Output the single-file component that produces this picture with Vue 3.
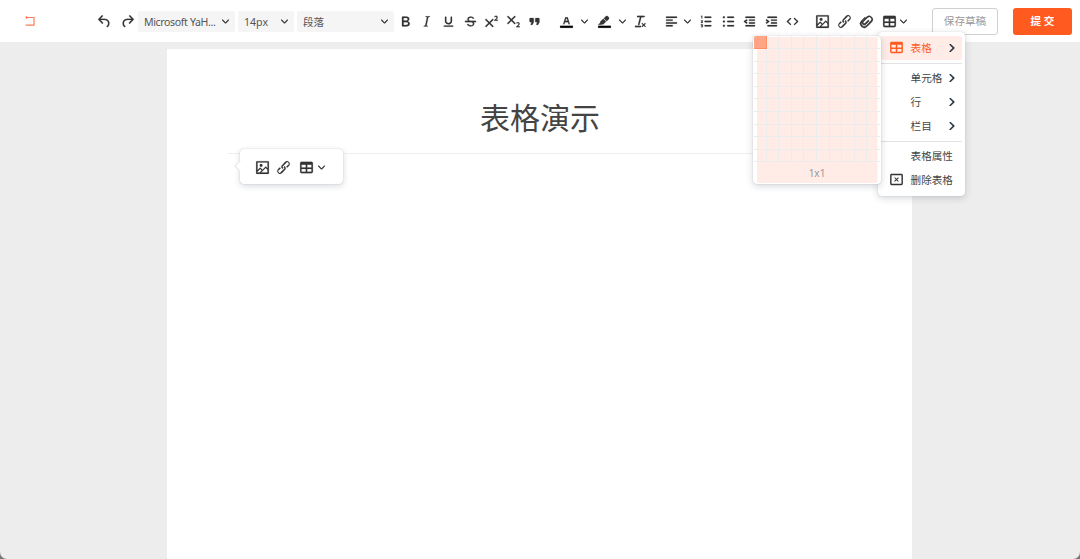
<template>
    <div class="editor">
        <header class="toolbar">
            <div class="back">
                <svg viewBox="0 0 12 12"><path d="M3 1.4 2 2.5l1 1.1M2 2.5h8v7.6H1.6" /></svg>
            </div>
            <div class="group history">
                <span class="tool"><svg viewBox="0 0 24 24"><path :d="icons.undo" /></svg></span>
                <span class="tool"><svg class="flip" viewBox="0 0 24 24"><path :d="icons.undo" /></svg></span>
            </div>
            <div class="group selects">
                <div v-for="s in selects" :key="s.text" class="select" :class="s.size">
                    <span>{{ s.text }}</span>
                    <svg class="chevron" viewBox="0 0 10 10"><path :d="icons.chevron" /></svg>
                </div>
            </div>
            <div v-for="(group, i) in groups" :key="i" class="group" :class="'group-' + i">
                <template v-for="name in group" :key="name">
                    <span class="tool" :class="name"><svg viewBox="0 0 24 24"><path :d="icons[name]" fill-rule="evenodd" /><path v-if="name === 'color' || name === 'highlight'" class="swatch" d="M3 18h18v3H3z" /></svg></span>
                    <span v-if="withArrow.includes(name)" class="arrow"><svg class="chevron" viewBox="0 0 10 10"><path :d="icons.chevron" /></svg></span>
                </template>
            </div>
            <div class="actions">
                <button class="draft">保存草稿</button>
                <button class="submit">提 交</button>
            </div>
        </header>

        <main class="paper">
            <h1>表格演示</h1>
            <div class="quickbar">
                <span v-for="name in ['image', 'link', 'table']" :key="name" class="tool" :class="name"><svg viewBox="0 0 24 24"><path :d="icons[name]" /></svg></span>
                <span class="arrow"><svg class="chevron" viewBox="0 0 10 10"><path :d="icons.chevron" /></svg></span>
            </div>
        </main>

        <div class="menu">
            <template v-for="item in menu" :key="item.text">
                <div class="menu-item" :class="{ active: item.active }">
                    <span class="menu-icon"><svg v-if="item.icon" viewBox="0 0 24 24"><path :d="icons[item.icon]" /></svg></span>
                    <span class="menu-text">{{ item.text }}</span>
                    <svg v-if="item.sub" class="caret" viewBox="0 0 10 10"><path :d="icons.chevron" /></svg>
                </div>
                <div v-if="item.line" class="line"></div>
            </template>
        </div>

        <div class="picker">
            <div class="cells">
                <i v-for="n in 100" :key="n" :class="{ picked: n === 1 }"></i>
            </div>
            <div class="size">1x1</div>
        </div>
    </div>
</template>

<script setup>
const icons = {
    undo: 'M6.4 8H12c3.7 0 6.2 2 6.8 5.1.6 2.7-.4 5.6-2.3 6.8a1 1 0 0 1-1-1.8c1.1-.6 1.8-2.7 1.4-4.6-.5-2.1-2.1-3.5-4.9-3.5H6.4l3.3 3.3a1 1 0 1 1-1.4 1.4l-5-5a1 1 0 0 1 0-1.4l5-5a1 1 0 0 1 1.4 1.4L6.4 8Z',
    chevron: 'M8.7 2.2c.3-.3.8-.3 1 0 .4.4.4.9 0 1.2L5.7 7.8c-.3.3-.9.3-1.2 0L.2 3.4a.8.8 0 0 1 0-1.2c.3-.3.8-.3 1.1 0L5 6l3.7-3.8Z',
    bold: 'M7.8 19c-.3 0-.5 0-.6-.2l-.2-.5V5.7c0-.2 0-.4.2-.5l.6-.2h5c1.5 0 2.7.3 3.5 1 .7.6 1.1 1.4 1.1 2.5a3 3 0 0 1-.6 1.9c-.4.6-1 1-1.6 1.2.4.1.9.3 1.3.6s.8.7 1 1.2c.4.4.5 1 .5 1.6 0 1.3-.4 2.3-1.3 3-.8.7-2.1 1-3.8 1H7.8Zm5-8.3c.6 0 1.2-.1 1.6-.5.4-.3.6-.7.6-1.3 0-1.1-.8-1.7-2.3-1.7H9.3v3.5h3.4Zm.5 6c.7 0 1.3-.1 1.7-.4.4-.4.6-.9.6-1.5s-.2-1-.7-1.4c-.4-.3-1-.4-2-.4H9.4v3.8h4Z',
    italic: 'm16.7 4.7-.1.9h-.3c-.6 0-1 0-1.4.3-.3.3-.4.6-.5 1.1l-2.1 9.8v.6c0 .5.4.8 1.4.8h.2l-.2.8H8l.2-.8h.2c1.1 0 1.8-.5 2-1.5l2-9.8.1-.5c0-.6-.4-.8-1.4-.8h-.3l.2-.9h5.8Z',
    underline: 'M16 5c.6 0 1 .4 1 1v5.5a4 4 0 0 1-.4 1.8l-1 1.4a5.3 5.3 0 0 1-5.5 1 5 5 0 0 1-1.6-1c-.5-.4-.8-.9-1.1-1.4a4 4 0 0 1-.4-1.8V6c0-.6.4-1 1-1s1 .4 1 1v5.5c0 .3 0 .6.2 1l.6.7a3.3 3.3 0 0 0 2.2.8 3.4 3.4 0 0 0 2.2-.8c.3-.2.4-.5.6-.8l.2-.9V6c0-.6.4-1 1-1ZM6 17.5h12c.5 0 .9.4.9.9s-.4.9-.9.9H6a.9.9 0 0 1 0-1.8Z',
    strike: 'M15.6 8.5c-.5-.7-1-1.1-1.3-1.3-.6-.4-1.3-.6-2-.6-2.7 0-2.8 1.7-2.8 2.1 0 1.1.9 1.7 2 2.1l.3.2H19a1 1 0 0 1 0 2h-2.6c.7.7.9 1.4.9 1.9 0 1.4-.7 4.1-5 4.1A6.2 6.2 0 0 1 7 16.4l1.5-1.1c.4.6 1.6 2 3.7 2 1.6 0 2.5-.4 3-1.2.4-.8.3-2-.8-2.6l-1.3-.5H5a1 1 0 0 1 0-2h3.4c-.5-.5-.8-1.2-.8-2.1C7.6 6 10.3 5 12.4 5c2.9 0 4.2 1.6 4.7 2.4l-1.5 1.1Z',
    sup: 'M15 9.4 10.4 14l4.6 4.6-1.4 1.4L9 15.4 4.4 20 3 18.6 7.6 14 3 9.4 4.4 8 9 12.6 13.6 8 15 9.4Zm5.9 1.6h-5v-1l1-.8 1.7-1.6c.3-.5.5-.9.5-1.3 0-.3 0-.5-.2-.7-.2-.2-.5-.3-.9-.3l-.8.2-.7.4-.4-1.2c.2-.2.5-.4 1-.5.3-.2.8-.2 1.2-.2.8 0 1.4.2 1.8.6.4.4.6 1 .6 1.6 0 .5-.2 1-.5 1.5l-1.3 1.4-.6.5h2.6V11Z',
    sub: 'M15 5.4 10.4 10l4.6 4.6-1.4 1.4L9 11.4 4.4 16 3 14.6 7.6 10 3 5.4 4.4 4 9 8.6 13.6 4 15 5.4Zm5.9 14.6h-5v-1l1-.8 1.7-1.6c.3-.5.5-.9.5-1.3 0-.3 0-.5-.2-.7-.2-.2-.5-.3-.9-.3l-.8.2-.7.4-.4-1.2c.2-.2.5-.4 1-.5.3-.2.8-.2 1.2-.2.8 0 1.4.2 1.8.6.4.4.6 1 .6 1.6 0 .5-.2 1-.5 1.5l-1.3 1.4-.6.5h2.6V20Z',
    quote: 'M7.5 17h.9c.4 0 .7-.2.9-.6L11 13V8c0-.6-.4-1-1-1H6a1 1 0 0 0-1 1v4c0 .6.4 1 1 1h2l-1.3 2.7a1 1 0 0 0 .8 1.3Zm8 0h.9c.4 0 .7-.2.9-.6L19 13V8c0-.6-.4-1-1-1h-4a1 1 0 0 0-1 1v4c0 .6.4 1 1 1h2l-1.3 2.7a1 1 0 0 0 .8 1.3Z',
    color: 'M8.7 16h-.8a.5.5 0 0 1-.5-.6l2.7-9c.1-.3.3-.4.5-.4h2.8c.2 0 .4.1.5.4l2.7 9a.5.5 0 0 1-.5.6h-.8a.5.5 0 0 1-.4-.4l-.7-2.2c0-.3-.3-.4-.5-.4h-3.4c-.2 0-.4.1-.5.4l-.7 2.2c0 .3-.2.4-.4.4Zm2.6-7.6-.6 2a.5.5 0 0 0 .5.6h1.6a.5.5 0 0 0 .5-.6l-.6-2c0-.3-.3-.4-.5-.4h-.4c-.2 0-.4.1-.5.4Z',
    highlight: 'M7.7 16.7H3l3.3-3.3-.7-.8L10.2 8l4 4.1-4 4.2c-.2.2-.6.2-.8 0l-.6-.7-1.1 1.1Zm5-7.5L11 7.4l3-2.9a2 2 0 0 1 2.6 0L18 6c.7.7.7 2 0 2.7l-2.9 2.9-1.8-1.8-.5-.6Z',
    clear: 'M13.2 6v.2l-2.6 10a1 1 0 0 1-1 .8h-.2a.8.8 0 0 1-.8-1l2.6-10H8a1 1 0 1 1 0-2h9a1 1 0 0 1 0 2h-3.8ZM5 18h7a1 1 0 0 1 0 2H5a1 1 0 0 1 0-2Zm13 1.5L16.5 18 15 19.5a.7.7 0 0 1-1-1l1.5-1.5-1.5-1.5a.7.7 0 0 1 1-1l1.5 1.5 1.5-1.5a.7.7 0 0 1 1 1L17.5 17l1.5 1.5a.7.7 0 0 1-1 1Z',
    align: 'M5 5h14a1 1 0 0 1 0 2H5a1 1 0 1 1 0-2Zm0 4h8a1 1 0 0 1 0 2H5a1 1 0 1 1 0-2Zm0 8h8a1 1 0 0 1 0 2H5a1 1 0 0 1 0-2Zm0-4h14a1 1 0 0 1 0 2H5a1 1 0 0 1 0-2Z',
    ol: 'M10 17h8a1 1 0 0 1 0 2h-8a1 1 0 0 1 0-2Zm0-6h8a1 1 0 0 1 0 2h-8a1 1 0 0 1 0-2Zm0-6h8a1 1 0 1 1 0 2h-8a1 1 0 1 1 0-2ZM6 4v3.5c0 .3-.2.5-.5.5a.5.5 0 0 1-.5-.5V5h-.5a.5.5 0 0 1 0-1H6Zm-1 8.8.2.2h1.3c.3 0 .5.2.5.5s-.2.5-.5.5H4.9a1 1 0 0 1-.9-1V13c0-.4.3-.8.6-1l1.2-.4.2-.3a.2.2 0 0 0-.2-.2H4.5a.5.5 0 0 1-.5-.5c0-.3.2-.5.5-.5h1.6c.5 0 .9.4.9 1v.1c0 .4-.3.8-.6 1l-1.2.4-.2.3ZM7 17v2c0 .6-.4 1-1 1H4.5a.5.5 0 0 1 0-1h1.2c.2 0 .3-.1.3-.3 0-.2-.1-.3-.3-.3H4.4a.4.4 0 1 1 0-.8h1.3c.2 0 .3-.1.3-.3 0-.2-.1-.3-.3-.3H4.5a.5.5 0 1 1 0-1H6c.6 0 1 .4 1 1Z',
    ul: 'M11 5h8a1 1 0 0 1 0 2h-8a1 1 0 0 1 0-2Zm0 6h8a1 1 0 0 1 0 2h-8a1 1 0 0 1 0-2Zm0 6h8a1 1 0 0 1 0 2h-8a1 1 0 0 1 0-2ZM4 6a1.5 1.5 0 1 1 3 0 1.5 1.5 0 0 1-3 0Zm0 6a1.5 1.5 0 1 1 3 0 1.5 1.5 0 0 1-3 0Zm0 6a1.5 1.5 0 1 1 3 0 1.5 1.5 0 0 1-3 0Z',
    outdent: 'M7 5h12a1 1 0 0 1 0 2H7a1 1 0 1 1 0-2Zm5 4h7a1 1 0 0 1 0 2h-7a1 1 0 0 1 0-2Zm0 4h7a1 1 0 0 1 0 2h-7a1 1 0 0 1 0-2Zm-5 4h12a1 1 0 0 1 0 2H7a1 1 0 0 1 0-2Zm1.6-3.8a1 1 0 0 1-1.2 1.6l-3-2a1 1 0 0 1 0-1.6l3-2a1 1 0 0 1 1.2 1.6L6.8 12l1.8 1.2Z',
    indent: 'M7 5h12a1 1 0 0 1 0 2H7a1 1 0 1 1 0-2Zm5 4h7a1 1 0 0 1 0 2h-7a1 1 0 0 1 0-2Zm0 4h7a1 1 0 0 1 0 2h-7a1 1 0 0 1 0-2Zm-5 4h12a1 1 0 0 1 0 2H7a1 1 0 0 1 0-2Zm-2.6-3.8L6.2 12l-1.8-1.2a1 1 0 0 1 1.2-1.6l3 2a1 1 0 0 1 0 1.6l-3 2a1 1 0 1 1-1.2-1.6Z',
    code: 'M9.8 15.7c.3.3.3.8 0 1-.3.4-.9.4-1.2 0l-4.4-4.1a.8.8 0 0 1 0-1.2l4.4-4.2c.3-.3.9-.3 1.2 0 .3.3.3.8 0 1.1L6 12l3.8 3.7Zm4.4 0c-.3.3-.3.8 0 1 .4.4.9.4 1.2 0l4.4-4.1c.3-.3.3-.9 0-1.2l-4.4-4.2a.8.8 0 0 0-1.2 0c-.3.3-.3.8 0 1.1L18 12l-3.8 3.7Z',
    image: 'm5 15.7 3.3-3.2c.3-.3.7-.3 1 0L12 15l4.1-4c.3-.4.8-.4 1 0l2 1.9V5H5v10.7ZM5 18V19h3l2.8-2.9-2-2L5 17.9Zm14-3-2.5-2.4-6.4 6.5H19v-4ZM4 3h16c.6 0 1 .4 1 1v16c0 .6-.4 1-1 1H4a1 1 0 0 1-1-1V4c0-.6.4-1 1-1Zm6 8a2 2 0 1 0 0-4 2 2 0 0 0 0 4Z',
    link: 'M6.2 12.3a1 1 0 0 1 1.4 1.4l-2 2a2 2 0 1 0 2.6 2.8l4.8-4.8a1 1 0 0 0 0-1.4 1 1 0 1 1 1.4-1.3 2.9 2.9 0 0 1 0 4L9.6 20a3.9 3.9 0 0 1-5.5-5.5l2-2Zm11.6-.6a1 1 0 0 1-1.4-1.4l2-2a2 2 0 1 0-2.6-2.8L11 10.3a1 1 0 0 0 0 1.4A1 1 0 1 1 9.6 13a2.9 2.9 0 0 1 0-4L14.4 4a3.9 3.9 0 0 1 5.5 5.5l-2 2Z',
    clip: 'M12.6 5.2a5 5 0 0 1 7 7l-6.8 6.9a5.6 5.6 0 0 1-8-8l5-5 1.2 1.2-5 5a3.9 3.9 0 0 0 5.6 5.6l6.8-6.9a3.3 3.3 0 0 0-4.7-4.7l-6 6a1.6 1.6 0 0 0 2.3 2.3l4.6-4.6 1.2 1.2-4.6 4.6a3.3 3.3 0 0 1-4.7-4.7l6.1-5.9Z',
    table: 'M19 4a2 2 0 0 1 2 2v12a2 2 0 0 1-2 2H5a2 2 0 0 1-2-2V6c0-1.1.9-2 2-2h14ZM5 14v4h6v-4H5Zm14 0h-6v4h6v-4Zm0-6h-6v4h6V8ZM5 12h6V8H5v4Z',
    remove: 'M19 4a2 2 0 0 1 2 2v12a2 2 0 0 1-2 2H5a2 2 0 0 1-2-2V6c0-1.1.9-2 2-2h14ZM5 6v12h14V6H5Zm4.7 2.8L12 11l2.3-2.2 1 1L13 12l2.2 2.3-1 1L12 13l-2.3 2.2-1-1L11 12 8.8 9.7l1-1Z'
}

const selects = [
    { text: 'Microsoft YaH...', size: 'wide latin' },
    { text: '14px', size: 'narrow' },
    { text: '段落', size: 'wide' }
]

const groups = [
    ['bold', 'italic', 'underline', 'strike', 'sup', 'sub', 'quote'],
    ['color', 'highlight', 'clear'],
    ['align', 'ol', 'ul', 'outdent', 'indent', 'code'],
    ['image', 'link', 'clip', 'table']
]
const withArrow = ['color', 'highlight', 'align', 'table']

const menu = [
    { text: '表格', icon: 'table', sub: true, active: true, line: true },
    { text: '单元格', sub: true },
    { text: '行', sub: true },
    { text: '栏目', sub: true, line: true },
    { text: '表格属性' },
    { text: '删除表格', icon: 'remove' }
]
</script>

<style>
    body {
        background: #777;
    }
</style>

<style scoped>
    .editor {
        position: relative;
        height: 559px;
        overflow: hidden;
        background: #ededed;
        border-radius: 0 0 7px 7px;
        font-family: "Noto Sans", "Noto Sans CJK SC", sans-serif;
        font-size: 10.6px;
        color: #444;
    }

    .toolbar {
        display: flex;
        align-items: center;
        box-sizing: border-box;
        height: 42px;
        padding-right: 8px;
        background: #fff;
    }

    .back {
        width: 94px;
        height: 12px;
    }
    .back svg {
        display: block;
        width: 12px;
        height: 12px;
        margin-left: 24px;
        fill: none;
        stroke: #ff7d55;
        stroke-width: 1.2;
    }

    .group {
        display: flex;
        align-items: center;
        flex: none;
    }
    .history {
        width: 44px;
        gap: 1px;
    }
    .selects {
        gap: 3.5px;
    }
    .group-0 {
        margin-left: 1px;
    }
    .group-1 {
        margin-left: 10.5px;
    }
    .group-2 {
        margin-left: 9px;
    }
    .group-3 {
        margin-left: 8.5px;
    }

    .tool {
        display: flex;
        align-items: center;
        justify-content: center;
        flex: none;
        width: 21.6px;
        height: 22px;
    }
    .tool svg {
        width: 17px;
        height: 17px;
        fill: #333;
        stroke: #333;
        stroke-width: .25;
    }
    .tool .flip {
        transform: scaleX(-1);
    }
    .tool .swatch {
        fill: #000;
    }
    .clip svg {
        stroke-width: 1;
    }
    .tool.table {
        margin-left: 1.5px;
    }
    .arrow {
        display: flex;
        justify-content: center;
        width: 14.4px;
    }
    .group-1 .arrow {
        margin-right: 2px;
    }
    .group-1 .clear {
        margin-left: -2px;
    }
    .group-2 .arrow {
        margin: 0 1.5px 0 -2.5px;
    }
    .table + .arrow {
        margin-left: -3.5px;
    }
    .chevron {
        flex: none;
        width: 7px;
        height: 7px;
        fill: #333;
    }

    .select {
        display: flex;
        align-items: center;
        justify-content: space-between;
        box-sizing: border-box;
        height: 21px;
        padding: 0 5.5px 0 6px;
        background: #f5f5f5;
        border-radius: 2px;
        color: #555;
        white-space: nowrap;
    }
    .select span {
        padding-top: 1px;
    }
    .wide {
        width: 96.5px;
    }
    .narrow {
        width: 55.5px;
    }
    .latin span {
        letter-spacing: -.38px;
    }

    .actions {
        display: flex;
        gap: 15px;
        margin-left: auto;
    }
    .actions button {
        box-sizing: border-box;
        height: 27px;
        padding: 0 0 1px;
        border-radius: 3px;
        font-family: inherit;
        font-size: 10.6px;
    }
    .draft {
        width: 66px;
        border: 1px solid #d0d0d0;
        background: #fff;
        color: #999;
    }
    .submit {
        width: 59px;
        border: 0;
        background: #ff5a1f;
        color: #fff;
        font-weight: 600;
    }

    .paper {
        box-sizing: border-box;
        width: 745px;
        height: 510px;
        margin: 7px auto 0 167.4px;
        padding: 42px 61px 0;
        background: #fff;
    }
    .paper h1 {
        height: 62px;
        margin: 0;
        border-bottom: 1px solid #eee;
        font-size: 30px;
        line-height: 54px;
        font-weight: 400;
        text-align: center;
        color: #444;
    }

    .quickbar {
        position: absolute;
        top: 149px;
        left: 240px;
        display: flex;
        align-items: center;
        box-sizing: border-box;
        width: 103px;
        height: 35px;
        padding: 1px 0 0 11.4px;
        background: #fff;
        border-radius: 4px;
        box-shadow: 0 0 1px rgba(34, 47, 62, .35), 0 2px 6px rgba(34, 47, 62, .18);
    }
    .quickbar::before {
        content: "";
        position: absolute;
        left: -4px;
        top: 13px;
        width: 7px;
        height: 7px;
        background: #fff;
        border-left: 1px solid #e6e6e6;
        border-bottom: 1px solid #e6e6e6;
        transform: rotate(45deg);
    }

    .menu {
        position: absolute;
        top: 32px;
        left: 878px;
        box-sizing: border-box;
        width: 87px;
        height: 164px;
        padding: 3.5px 3px;
        background: #fff;
        border-radius: 4px;
        box-shadow: 0 0 1px rgba(34, 47, 62, .3), 0 2px 7px rgba(34, 47, 62, .2);
    }
    .menu-item {
        display: flex;
        align-items: center;
        height: 24px;
        padding: 0 6px 0 6.6px;
        border-radius: 2px;
        white-space: nowrap;
    }
    .menu-icon {
        width: 23px;
        height: 17px;
        flex: none;
    }
    .menu-icon svg {
        width: 17px;
        height: 17px;
        fill: #333;
    }
    .caret {
        width: 8px;
        height: 8px;
        margin-left: auto;
        fill: #222f3e;
        stroke: #222f3e;
        stroke-width: .4;
        transform: rotate(-90deg);
    }
    .active {
        background: #ffece6;
        color: #ff5a1f;
    }
    .active .menu-icon svg {
        fill: #ff5a1f;
    }
    .line {
        height: 1px;
        margin: 3px 0 2px;
        background: #e3e3e3;
    }

    .picker {
        position: absolute;
        top: 36px;
        left: 753px;
        box-sizing: border-box;
        width: 128px;
        height: 148px;
        padding: .4px 1px 0;
        background: linear-gradient(#ffece6, #ffece6) 4px 1px / 120.5px 146px no-repeat #fff;
        border-radius: 4px;
        box-shadow: 0 0 1px rgba(34, 47, 62, .35), 0 2px 7px rgba(34, 47, 62, .2);
    }
    .cells {
        display: grid;
        grid-template-columns: repeat(10, 1fr);
        grid-auto-rows: 12.6px;
    }
    .cells i {
        border-right: 1px solid #ececec;
        border-bottom: 1px solid #ececec;
    }
    .cells i:nth-child(10n) {
        border-right: 0;
    }
    .cells .picked {
        background: #ffa585;
        border-color: #ff8f68;
        border-radius: 2px 0 0 0;
    }
    .size {
        font-size: 10px;
        line-height: 23px;
        text-align: center;
        color: #999;
    }
</style>
